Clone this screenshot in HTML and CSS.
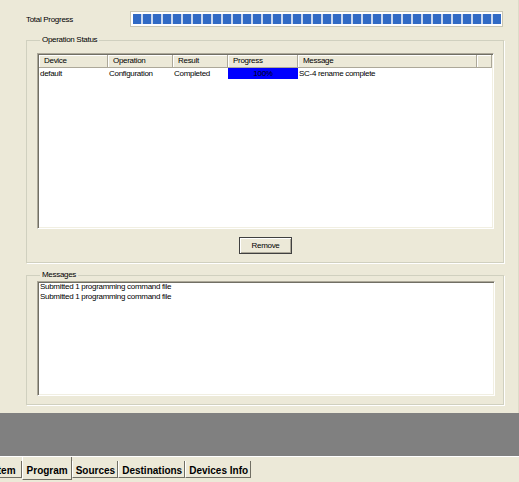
FILE: index.html
```html
<!DOCTYPE html>
<html lang="en">
<head>
    <meta charset="UTF-8">
    <title>Program</title>
    <link rel="stylesheet" href="styles.css">
</head>
<body>
    <div class="window">
        <div class="main">
            <div class="total">
                <span class="total-label">Total Progress</span>
                <div class="progress"><div class="progress-fill"></div></div>
            </div>

            <fieldset class="group ops">
                <legend>Operation Status</legend>
                <div class="listview">
                    <div class="lv-row lv-head">
                        <div>Device</div>
                        <div>Operation</div>
                        <div>Result</div>
                        <div>Progress</div>
                        <div>Message</div>
                        <div></div>
                    </div>
                    <div class="lv-row lv-item">
                        <div>default</div>
                        <div>Configuration</div>
                        <div>Completed</div>
                        <div class="cell-progress">100%</div>
                        <div>SC-4 rename complete</div>
                        <div></div>
                    </div>
                </div>
                <div class="actions">
                    <button class="btn">Remove</button>
                </div>
            </fieldset>

            <fieldset class="group msgs">
                <legend>Messages</legend>
                <div class="listbox">
                    <div>Submitted 1 programming command file</div>
                    <div>Submitted 1 programming command file</div>
                </div>
            </fieldset>
        </div>

        <div class="workspace"></div>

        <div class="tabs">
            <div class="tab tab-cut">System</div>
            <div class="tab active">Program</div>
            <div class="tab">Sources</div>
            <div class="tab">Destinations</div>
            <div class="tab">Devices Info</div>
        </div>
    </div>
</body>
</html>
```

FILE: styles.css
```css
html, body {
    margin: 0;
    padding: 0;
}
body {
    width: 519px;
    height: 482px;
    overflow: hidden;
    background-color: #ece9d8;
    font-family: "Liberation Sans", Arial, sans-serif;
    font-size: 8px;
    letter-spacing: -0.3px;
    color: #000;
}
.window {
    width: 519px;
    height: 482px;
    display: flex;
    flex-direction: column;
}
.main {
    height: 413px;
    box-sizing: border-box;
    padding: 11px 14px 0 26px;
    border-right: 1px solid #dedac8;
}
.total {
    display: flex;
    align-items: center;
    height: 16px;
}
.total-label {
    width: 104px;
}
.progress {
    width: 373px;
    height: 16px;
    box-sizing: border-box;
    border: 1px solid #c9c6b4;
    background-color: #fff;
    padding: 2px 1px 2px 2px;
}
.progress-fill {
    height: 100%;
    background: repeating-linear-gradient(90deg, #316ac5 0, #316ac5 8px, #c8d6ee 8px, #c8d6ee 10px);
}
.group {
    margin: 0;
    min-width: 0;
    border: 1px solid #d0d0bf;
    box-shadow: 1px 1px 0 #fff;
}
.group legend {
    margin-left: 3px;
    padding: 0 2px;
    line-height: 10px;
    background-color: #ece9d8;
}
.ops {
    margin-top: 8px;
    padding: 8px 9px 8px 10px;
}
.msgs {
    margin-top: 7px;
    padding: 0 8px 8px 10px;
}
.listview, .listbox {
    box-sizing: border-box;
    background-color: #fff;
    border: 1px solid;
    border-color: #aca899 #fff #fff #aca899;
    box-shadow: inset 1px 1px 0 #716f64, inset -1px -1px 0 #f1efe2;
    padding: 1px;
}
.listview {
    height: 176px;
}
.lv-row {
    display: grid;
    grid-template-columns: 69px 65px 55px 70px 179px 1fr;
}
.lv-head div {
    height: 13px;
    line-height: 12px;
    box-sizing: border-box;
    padding-left: 5px;
    background-color: #ece9d8;
    border-right: 1px solid #aca899;
    border-bottom: 1px solid #aca899;
    box-shadow: inset 1px 1px 0 #fff;
}
.lv-item div {
    line-height: 11px;
    padding-left: 1px;
    white-space: nowrap;
}
.lv-item .cell-progress {
    background-color: #0000ff;
    text-align: center;
    padding-left: 0;
    color: #000;
}
.actions {
    display: flex;
    justify-content: center;
    margin-top: 8px;
}
.btn {
    width: 53px;
    height: 17px;
    padding: 0;
    font-family: inherit;
    font-size: 8px;
    letter-spacing: -0.3px;
    background-color: #ece9d8;
    border: 1px solid #404040;
    box-shadow: inset 1px 1px 0 #fff, inset -1px -1px 0 #aca899;
    color: #000;
}
.listbox {
    height: 115px;
    line-height: 10px;
    padding: 0 2px;
    margin-top: 1px;
}
.workspace {
    height: 43px;
    background-color: #808080;
}
.tabs {
    flex: 1;
    display: flex;
    align-items: flex-start;
    border-top: 1px solid #fff;
    font-size: 10px;
    font-weight: bold;
    letter-spacing: 0;
}
.tab {
    margin-top: 4px;
    height: 17px;
    line-height: 19px;
    box-sizing: border-box;
    padding: 0 2px 0 3px;
    border-left: 1px solid #fff;
    border-right: 1px solid #716f64;
    border-bottom: 1px solid #716f64;
}
.tab-cut {
    margin-left: -24px;
    padding-right: 5px;
}
.tab.active {
    margin-top: 0;
    height: 23px;
    line-height: 27px;
    padding: 0 3px 0 4px;
}
```
